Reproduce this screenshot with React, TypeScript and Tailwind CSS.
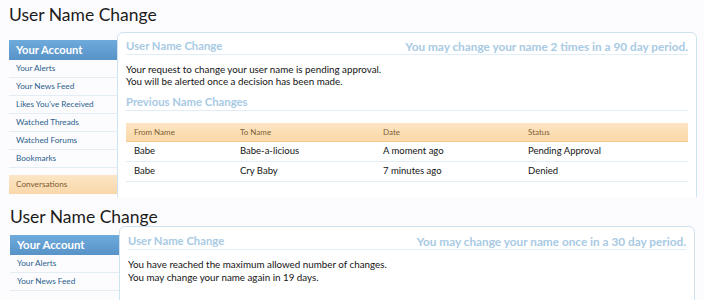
import React from "react";

const font = { fontFamily: "Lato, 'Liberation Sans', sans-serif" };

function SideItem({ label }: { label: string }) {
  return (
    <div className="h-[18px] border-b border-[#e4edf4] pl-[7px] flex items-center text-[8.2px] text-[#2b5f8c]">
      {label}
    </div>
  );
}

function SubHead({ left, right }: { left: string; right?: string }) {
  return (
    <div className="h-[16px] border-b border-[#e2eef7] flex items-center justify-between font-bold text-[#a8cae4]">
      <span className="text-[11.3px]">{left}</span>
      {right && <span className="text-[11.8px]">{right}</span>}
    </div>
  );
}

function Top() {
  const rows = [
    ["Babe", "Babe-a-licious", "A moment ago", "Pending Approval"],
    ["Babe", "Cry Baby", "7 minutes ago", "Denied"],
  ];
  return (
    <div className="h-[197px] overflow-hidden">
      <div className="pl-[9px] pt-[3px] h-[26px] text-[17.5px] leading-[24px] text-[#1c1c1c]">User Name Change</div>
      <div className="flex mt-[6px] pl-[9px]">
        <div className="w-[108px] pt-[8px] shrink-0">
          <div className="h-[20px] bg-gradient-to-b from-[#6eaadb] to-[#5893c8] text-white text-[11.2px] font-bold pl-[7px] flex items-center">
            Your Account
          </div>
          <SideItem label="Your Alerts" />
          <SideItem label="Your News Feed" />
          <SideItem label="Likes You've Received" />
          <SideItem label="Watched Threads" />
          <SideItem label="Watched Forums" />
          <SideItem label="Bookmarks" />
          <div className="mt-[7px] h-[19px] bg-gradient-to-b from-[#fce6c6] to-[#f9d7a9] pl-[7px] flex items-center text-[8.2px] text-[#7e5a32]">
            Conversations
          </div>
        </div>
        <div className="w-[580px] h-[200px] shrink-0 bg-white border border-[#cfe2ef] rounded-t-[6px] px-[8px] pt-[6px]">
          <SubHead left="User Name Change" right="You may change your name 2 times in a 90 day period." />
          <div className="mt-[9px] text-[9.8px] leading-[11.5px] text-[#141414]">
            <div>Your request to change your user name is pending approval.</div>
            <div>You will be alerted once a decision has been made.</div>
          </div>
          <div className="mt-[8px]">
            <SubHead left="Previous Name Changes" />
          </div>
          <div className="mt-[12px]">
            <div className="h-[19px] bg-gradient-to-b from-[#fde5c3] to-[#fad8a8] border-b border-[#f4c98c] grid grid-cols-[106px_143px_145px_1fr] items-center pl-[8px] text-[8px] text-[#7e5e36]">
              <span>From Name</span>
              <span>To Name</span>
              <span>Date</span>
              <span>Status</span>
            </div>
            {rows.map((r, i) => (
              <div
                key={i}
                className="h-[20px] border-b border-[#e2edf4] grid grid-cols-[106px_143px_145px_1fr] items-center pl-[8px] text-[9.5px] text-[#141414]"
              >
                {r.map((c, j) => (
                  <span key={j}>{c}</span>
                ))}
              </div>
            ))}
          </div>
        </div>
      </div>
    </div>
  );
}

function Bottom() {
  return (
    <div className="h-[103px] overflow-hidden">
      <div className="pl-[10px] pt-[8px] h-[26px] text-[17.5px] leading-[24px] text-[#1c1c1c]">User Name Change</div>
      <div className="flex mt-[3px] pl-[10px]">
        <div className="w-[109px] pt-[9px] shrink-0">
          <div className="h-[20px] bg-gradient-to-b from-[#6eaadb] to-[#5893c8] text-white text-[11.4px] font-bold pl-[7px] flex items-center">
            Your Account
          </div>
          <SideItem label="Your Alerts" />
          <SideItem label="Your News Feed" />
        </div>
        <div className="w-[576px] h-[100px] shrink-0 bg-white border border-[#cfe2ef] rounded-t-[6px] px-[8px] pt-[7px]">
          <SubHead left="User Name Change" right="You may change your name once in a 30 day period." />
          <div className="mt-[8px] text-[9.8px] leading-[12.5px] text-[#141414]">
            <div>You have reached the maximum allowed number of changes.</div>
            <div>You may change your name again in 19 days.</div>
          </div>
        </div>
      </div>
    </div>
  );
}

export default function App() {
  return (
    <div className="w-[704px] h-[300px] overflow-hidden bg-[#fcfcfe]" style={font}>
      <Top />
      <Bottom />
    </div>
  );
}
